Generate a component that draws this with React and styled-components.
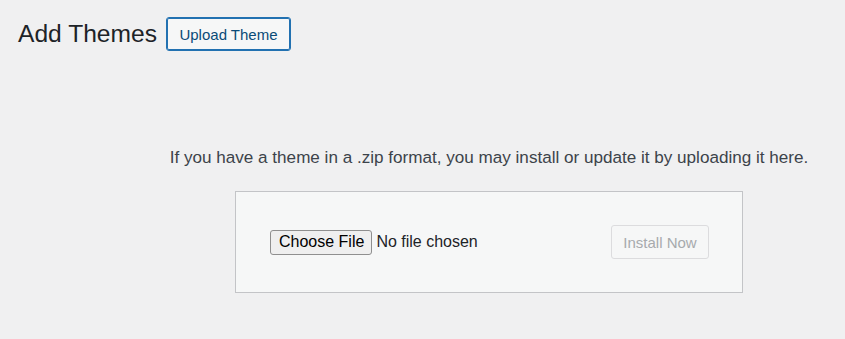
import React from 'react';
import styled, { createGlobalStyle } from 'styled-components';

const Global = createGlobalStyle`
    html, body {
        margin: 0;
        background: #f0f0f1;
    }
    body {
        font-family: 'Liberation Sans', Arial, sans-serif;
        color: #3c434a;
    }
`

const Page = styled.div`
    display: flex;
    flex-direction: column;
    width: 845px;
    height: 339px;
    box-sizing: border-box;
    padding: 17px 0 0 18px;
`

const Header = styled.div`
    display: flex;
    align-items: center;
    gap: 9px;
`

const Title = styled.h1`
    margin: 0;
    font-size: 24.6px;
    font-weight: 400;
    color: #1d2327;
    line-height: 34px;
`

const UploadButton = styled.button`
    height: 34px;
    width: 125px;
    padding: 0;
    font-family: inherit;
    font-size: 15px;
    color: #0a4b78;
    background: #f6f7f7;
    border: 1px solid #2271b1;
    border-radius: 3px;
    box-shadow: 0 0 0 1px #2271b1 inset;
    box-sizing: border-box;
`

const UploadWrap = styled.div`
    display: flex;
    flex-direction: column;
    align-items: center;
    padding: 96px 0 0 115px;
`

const Help = styled.p`
    margin: 0 0 22px;
    font-size: 17.1px;
    line-height: 22px;
    color: #3c434a;
    white-space: nowrap;
`

const Form = styled.form`
    display: flex;
    align-items: center;
    justify-content: space-between;
    width: 508px;
    height: 102px;
    box-sizing: border-box;
    padding: 0 33px 0 34px;
    background: #f6f7f7;
    border: 1px solid #c3c4c7;
`

const FilePicker = styled.div`
    display: flex;
    align-items: center;
    gap: 4px;
    font-size: 16px;
    color: #1d2327;
`

const ChooseButton = styled.span`
    display: inline-flex;
    align-items: center;
    height: 23px;
    padding: 0 7px 0 8px;
    background: #efefef;
    border: 1px solid #8f8f8f;
    border-radius: 3px;
    color: #000;
`

const InstallButton = styled.button`
    width: 98px;
    height: 34px;
    padding: 0;
    font-family: inherit;
    font-size: 15px;
    color: #a7aaad;
    background: #f6f7f7;
    border: 1px solid #dcdcde;
    border-radius: 3px;
`

export default function App() {
    return <Page>
        <Global />
        <Header>
            <Title>Add Themes</Title>
            <UploadButton>Upload Theme</UploadButton>
        </Header>
        <UploadWrap>
            <Help>If you have a theme in a .zip format, you may install or update it by uploading it here.</Help>
            <Form onSubmit={e => e.preventDefault()}>
                <FilePicker>
                    <ChooseButton>Choose File</ChooseButton>
                    No file chosen
                </FilePicker>
                <InstallButton disabled>Install Now</InstallButton>
            </Form>
        </UploadWrap>
    </Page>
}
